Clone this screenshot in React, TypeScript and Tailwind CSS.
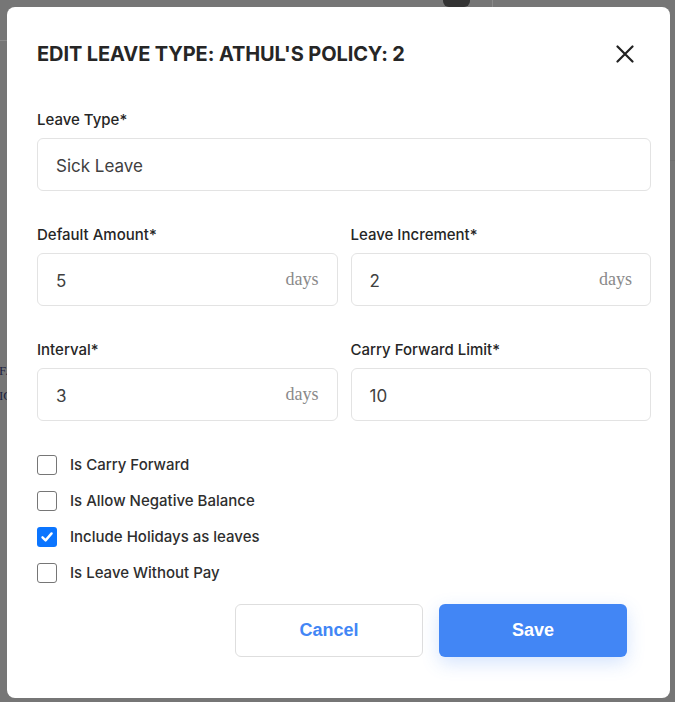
import React, { useState } from 'react';

const font = { fontFamily: 'Inter, "Noto Sans", sans-serif' };

function DaysInput({ value, suffix }: { value: string; suffix?: boolean }) {
  return (
    <div className="h-[53px] flex items-center justify-between rounded-md border border-[#e3e3e3] bg-white pl-[18px] pr-[18px]">
      <span className="mt-[5px] text-[17px] text-[#404040]">{value}</span>
      {suffix && (
        <span className="text-[18px] text-[#8a8a8a]" style={{ fontFamily: '"Liberation Serif", serif' }}>
          days
        </span>
      )}
    </div>
  );
}

function Field({ label, value, suffix }: { label: string; value: string; suffix?: boolean }) {
  return (
    <div className="flex flex-col gap-2 flex-1">
      <label className="text-[15px] leading-5 font-medium text-[#262626]">{label}</label>
      <DaysInput value={value} suffix={suffix} />
    </div>
  );
}

function Check({ label, checked, onToggle }: { label: string; checked: boolean; onToggle: () => void }) {
  return (
    <button type="button" onClick={onToggle} className="flex items-center gap-[13px] h-5 text-left">
      {checked ? (
        <span className="w-5 h-5 rounded-[3px] bg-[#0b75ff] flex items-center justify-center">
          <svg width="14" height="14" viewBox="0 0 14 14" fill="none">
            <path d="M2.5 7.3 5.6 10.4 11.6 3.4" stroke="white" strokeWidth="2.4" strokeLinecap="round" strokeLinejoin="round" />
          </svg>
        </span>
      ) : (
        <span className="w-5 h-5 rounded-[3px] border-[1.5px] border-[#767676] bg-white" />
      )}
      <span className="text-[15px] font-medium text-[#2e2e2e]">{label}</span>
    </button>
  );
}

export default function App() {
  const [checks, setChecks] = useState([false, false, true, false]);
  const labels = ['Is Carry Forward', 'Is Allow Negative Balance', 'Include Holidays as leaves', 'Is Leave Without Pay'];

  return (
    <div className="relative w-[675px] h-[702px] bg-[#767676] overflow-hidden pl-[7px] pt-[7px]" style={font}>
      {/* page behind the overlay */}
      <div className="absolute left-0 top-[40px] w-[7px] h-px bg-[#8a8a8a]" />
      <div className="absolute left-[443px] top-0 w-[27px] h-[7px] rounded-b-md bg-[#333]" />
      <div className="absolute left-[492px] top-0 w-px h-[7px] bg-[#8a8a8a]" />
      <div className="absolute right-0 top-[160px] w-[6px] h-px bg-[#707070]" />
      <div className="absolute left-0 top-[358px] text-[13px] leading-[25px] text-[#1d2240]" style={{ fontFamily: '"Liberation Serif", serif' }}>
        <div className="-ml-[1px]">F.</div>
        <div className="-ml-[1px]">IC</div>
      </div>

      <div className="relative w-[663px] h-[691px] rounded-lg bg-white pl-[30px] pr-[19px] pt-[33px] flex flex-col">
        <div className="flex items-center justify-between h-7">
          <h2 className="text-[20px] font-bold tracking-[-0.1px] text-[#262626]">EDIT LEAVE TYPE: ATHUL'S POLICY: 2</h2>
          <button type="button" className="mr-[17px] text-[#222]">
            <svg width="18" height="18" viewBox="0 0 18 18" fill="none">
              <path d="M1.5 1.5 16.5 16.5M16.5 1.5 1.5 16.5" stroke="currentColor" strokeWidth="2.2" strokeLinecap="round" />
            </svg>
          </button>
        </div>

        <div className="mt-[42px]">
          <Field label="Leave Type*" value="Sick Leave" />
        </div>

        <div className="mt-[34px] flex gap-[13px]">
          <Field label="Default Amount*" value="5" suffix />
          <Field label="Leave Increment*" value="2" suffix />
        </div>

        <div className="mt-[34px] flex gap-[13px]">
          <Field label="Interval*" value="3" suffix />
          <Field label="Carry Forward Limit*" value="10" />
        </div>

        <div className="mt-[34px] flex flex-col gap-4">
          {labels.map((l, i) => (
            <Check
              key={l}
              label={l}
              checked={checks[i]}
              onToggle={() => setChecks(checks.map((c, j) => (j === i ? !c : c)))}
            />
          ))}
        </div>

        <div className="mt-[21px] flex justify-end gap-4 mr-[24px]" style={{ fontFamily: '"Liberation Sans", Arial, sans-serif' }}>
          <button type="button" className="w-[188px] h-[53px] rounded-md border border-[#dedede] bg-white text-[18px] font-bold text-[#4286f5]">
            Cancel
          </button>
          <button type="button" className="w-[188px] h-[53px] rounded-md bg-[#4286f5] text-[18px] font-bold text-white shadow-[0_6px_18px_rgba(66,134,245,0.22)]">
            Save
          </button>
        </div>
      </div>
    </div>
  );
}
